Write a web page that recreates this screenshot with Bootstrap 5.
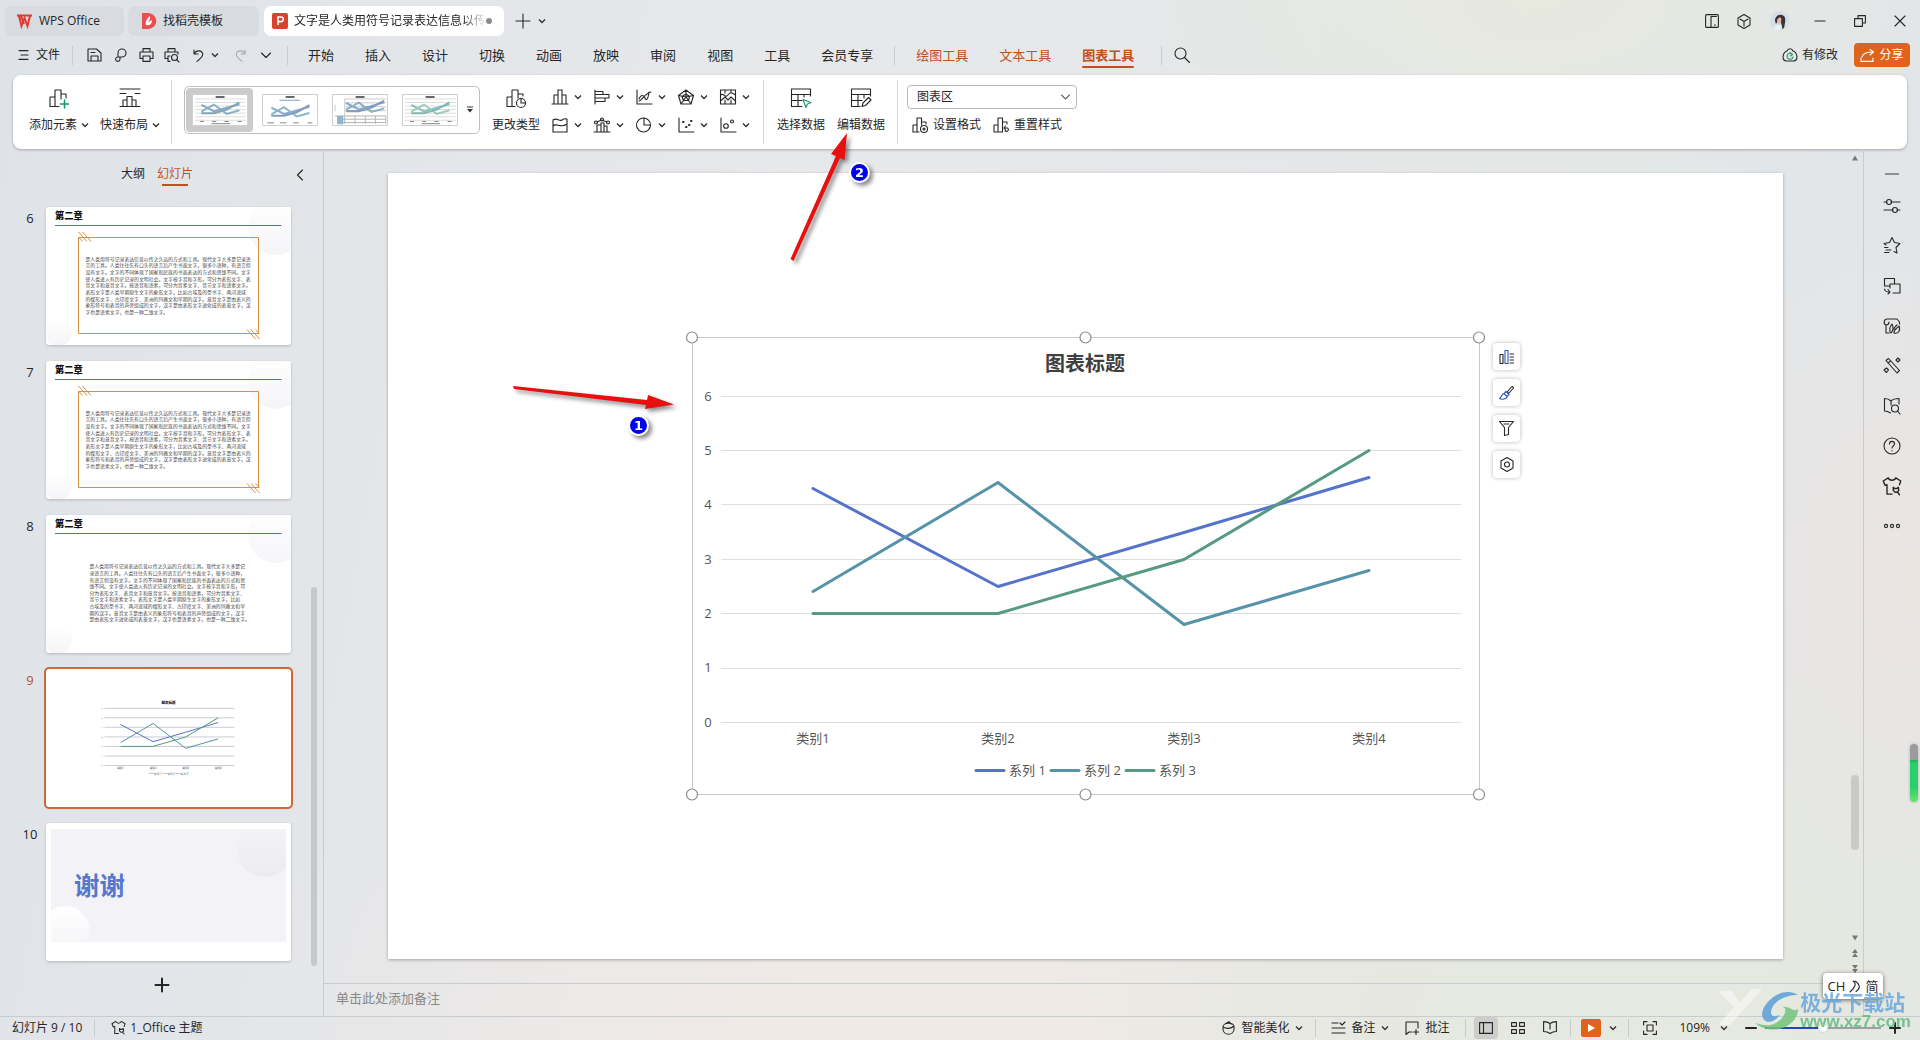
<!DOCTYPE html>
<html lang="zh-CN">
<head>
<meta charset="utf-8">
<meta name="viewport" content="width=device-width, initial-scale=1">
<title>WPS Office</title>
<link href="https://cdn.jsdelivr.net/npm/bootstrap@5.3.0/dist/css/bootstrap.min.css" rel="stylesheet">
<style>
:root{--ink:#262626;--line:#c9cccd;--accent:#c0501c;--brand:#e0631a}
body{font:12px/16px "Open Sans","Noto Sans CJK SC",sans-serif;color:var(--ink);overflow:hidden;
background:
radial-gradient(ellipse 420px 220px at 80% 0,#e7e9df,rgba(231,233,223,0)),
radial-gradient(ellipse 560px 420px at 84% 100%,#e6e9df 30%,rgba(230,233,223,0)),
radial-gradient(ellipse 700px 400px at 48% 100%,#f0eae6 20%,rgba(240,234,230,0)),
radial-gradient(ellipse 260px 380px at 100% 56%,#ece5e2,rgba(236,229,226,0)),
linear-gradient(100deg,#dfe3e8,#e7e8ea 40%,#e1e5e8)}
button{background:none;border:0;padding:0;color:inherit;font:inherit;line-height:16px}
a{color:inherit;text-decoration:none}
ul,ol{list-style:none;margin:0;padding:0}
svg{display:block;flex:none;overflow:visible}
polyline,#grid path,.plot path{fill:none;vector-effect:non-scaling-stroke}
.ic{fill:none;stroke:currentColor;stroke-width:1.1;stroke-linecap:round;stroke-linejoin:round}
.ic.bold{stroke-width:2}
.chev{width:8px;height:8px;fill:none;stroke:#333;stroke-width:1.4}
.vline{width:1px;background:var(--line);flex:none}
.ctr{display:grid;place-content:center}
/* title bar */
.titlebar{padding:6px 0 3px 5px}
.wtab{height:30px;border-radius:7px;background:#d8dbdf;flex:none}
.wtab.first{width:119px;padding-left:12px;gap:7px;margin-right:4px}
.wtab.second{width:131px;padding-left:14px;gap:7px;margin-right:5px}
.wtab.current{width:240px;background:#fff;padding:0 12px 0 8px;gap:6px}
.docname{width:192px;margin-right:-6px;white-space:nowrap;-webkit-mask-image:linear-gradient(90deg,#000 88%,transparent)}
.dot{width:6px;height:6px;border-radius:50%;background:#8b8b8b}
.wbtn{width:40px;height:30px}
.wbtn.slim{width:32px}
/* menu row */
.menurow{height:34px;margin-bottom:2px;padding:0 10px 2px 19px}
.menurow .vline{height:19px}
.qbtn{width:26px;height:26px}
.menutabs{gap:31px;font-size:13px}
.menutabs.main{margin:0 21px 0 20px}
.menutabs.tools{color:var(--accent);margin:0 27px 0 21px}
.menutabs .active{font-weight:700;position:relative}
.menutabs .active::after{content:"";position:absolute;left:0;right:0;bottom:-5px;height:2px;background:var(--accent);border-radius:1px}
.share{width:56px;height:24px;background:var(--brand);color:#fff;border-radius:4px}
/* ribbon */
.ribbon{height:74px;margin:0 13px;background:#fff;border-radius:8px;box-shadow:0 1px 3px rgba(0,0,0,.28)}
.ribbon .vline{margin:5px 0;background:#d5d5d5}
.tool{padding-top:11px;gap:7px}
.tool.drop{width:58px}
.tool.plain{width:48px}
.toolset{padding:0 12px 0 17px;gap:13px}
.toolset.data{padding:0 12px 0 13px;gap:12px}
.gallery{width:296px;height:48px;border:1px solid #bfbfbf;border-radius:5px;margin:11px 12px 0 12px;padding:1px 0 1px 1px;gap:3px}
.cell{width:67px;height:44px;border-radius:4px;padding:6px 5px 6px 6px}
.cell.on{background:#cbcbcb}
.cell svg{width:56px;height:32px;background:#fff;border:1px solid #d0d0d0;overflow:hidden}
.minis{display:grid;grid-template-columns:repeat(5,42px);grid-auto-rows:28px;margin:8px 2px 0 11px}
.minis button{display:flex;align-items:center;gap:5px}
.format{padding:10px 0 0 9px;gap:8px}
.part{width:170px;height:24px;font-size:12px;line-height:16px;border:1px solid #b9b9b9;border-radius:4px;padding:2px 24px 2px 9px;color:var(--ink);background-image:none}
.partwrap{position:relative}
.partwrap svg{position:absolute;right:7px;top:8px;pointer-events:none;color:#666}
.fmt{padding-left:5px;gap:12px}
/* slide panel */
.outline{width:324px;border-right:1px solid var(--line);flex:none}
.ohead{height:58px;padding:17px 0 0 121px}
.ohead .active{color:var(--accent);position:relative}
.ohead .active::after{content:"";position:absolute;left:5px;right:5px;bottom:-4px;height:2px;background:var(--accent)}
.slides{gap:16px}
.num{width:46px;padding:3px 0 0 14px;font-size:13px;text-align:center}
.num.active{color:var(--accent)}
.thumb{width:245px;height:138px;background:#fff;border-radius:3px;overflow:hidden;box-shadow:0 1px 3px rgba(0,0,0,.2)}
.thumb.active{outline:2px solid #cc6936}
.thumb svg{width:245px;height:138px;font-family:"Open Sans","Noto Sans CJK SC",sans-serif}
.obar{width:6px;height:379px;border-radius:3px;background:#c6c9cb;margin:380px 0 0 20px}
/* stage */
.stage{padding:24px 64px}
.sheet{background:#fff;box-shadow:0 1px 3px rgba(0,0,0,.3)}
.chartbox{width:787px;height:458px;position:relative}
.chartbox text{font-size:13px;fill:#555}
.chartbox .ctitle{font-size:20px;font-weight:700;fill:#404040;text-anchor:middle}
.mid text{text-anchor:middle}
.ctools{position:absolute;left:100%;top:6px;margin-left:14px;gap:9px}
.ctools button{width:27px;height:27px;border-radius:4px;background:#fff;box-shadow:0 0 4px rgba(0,0,0,.28)}
.s1{stroke:#5573cb}.s2{stroke:#5594a8}.s3{stroke:#569b80}
.vbar{width:16px;padding:6px 0 10px}
.vthumb{width:8px;height:75px;border-radius:4px;background:#c9cac8;margin-bottom:85px}
.notes{height:33px;border:0;border-top:1px solid var(--line);background:none;font-size:13px;line-height:18px;padding:5px 12px;color:#333;resize:none;outline:0;display:block}
.notes::placeholder{color:#888}
.rail{width:57px;border-left:1px solid var(--line);padding-top:24px;gap:20px}
.rail .dash{width:14px;height:2px;background:#8e8e8e;margin-bottom:1px}
/* status */
.status{height:24px;border-top:1px solid var(--line);padding-bottom:2px}
.status .vline{height:18px}
.sright{padding-right:19px}
.sitem{gap:6px}
.view{width:24px;height:22px;border-radius:3px}
.view.on{background:#cdcecb}
.playset{padding:0 11px 0 10px}
.play{width:20px;height:18px;background:var(--brand);border-radius:2px}
.fit{margin:0 22px 0 14px}
.pct{gap:10px;margin-right:17px}
.zoomer{width:116px;height:12px;-webkit-appearance:none;appearance:none;background:linear-gradient(90deg,#2449ae 50%,#9aa0a4 50%) center/100% 2px no-repeat;margin:0}
.zoomer::-webkit-slider-thumb{-webkit-appearance:none;width:10px;height:10px;border-radius:50%;background:#fff;border:1px solid #d5d9dd}
/* floating layers */
.callouts{position:absolute;left:0;top:0;pointer-events:none;filter:drop-shadow(3px 3px 2px rgba(0,0,0,.45))}
.callouts text{font:700 13px "DejaVu Sans",sans-serif;fill:#fff;text-anchor:middle}
.ime{position:absolute;right:37px;bottom:41px;width:60px;height:26px;background:#fff;border-radius:4px;box-shadow:0 1px 4px rgba(0,0,0,.6);font-size:13px}
.gauge{position:absolute;right:2px;top:744px;width:8px;height:58px;border-radius:4px;background:linear-gradient(#9b9b9b 28%,#22b35a 28%,#29cf6c 34%,#29cf6c 75%,#6fe36a);box-shadow:0 0 3px rgba(0,0,0,.25)}
.site{position:absolute;right:9px;bottom:7px;pointer-events:none;opacity:.85}
.site .cn{font:700 21px/23px "Noto Sans CJK SC",sans-serif;color:#6ba7dc}
.site .url{font:700 17px/17px "Liberation Sans",sans-serif;color:#63bb83}
</style>
</head>
<body class="vh-100 d-flex flex-column position-relative">
<svg width="0" height="0" class="position-absolute">
<defs>
<symbol id="cv" viewBox="0 0 8 8"><path d="M1 2.500 4 5.500 7 2.500"/></symbol>
<linearGradient id="orb" x1="0" y1="0" x2="0" y2="1"><stop offset="0" stop-color="#fff"/><stop offset="1" stop-color="#f5f5f8"/></linearGradient>
<linearGradient id="orb2" x1="0" y1="0" x2="0" y2="1"><stop offset="0" stop-color="#f5f5f8"/><stop offset="1" stop-color="#ebebf0"/></linearGradient>
<linearGradient id="orb3" x1="0" y1="0" x2="0" y2="1"><stop offset="0" stop-color="#fff"/><stop offset="1" stop-color="#f3f3f7"/></linearGradient>
<g id="grid"><path d="M29 60H769M29 114H769M29 168H769M29 223H769M29 277H769M29 332H769M29 386H769"/></g>
<g id="l1"><polyline points="121,152 306,250 492,196 677,141"/></g>
<g id="l2"><polyline points="121,255 306,146 492,288 677,234"/></g>
<g id="l3"><polyline points="121,277 306,277 492,223 677,114"/></g>
<g id="deco">
<circle cx="920" cy="80" r="112" fill="url(#orb)"/><circle cx="48" cy="500" r="56" fill="url(#orb)"/>
<text x="36" y="48" font-size="37" font-weight="900" fill="#111">第二章</text>
<path d="M36 74H942" stroke="#5470b0" stroke-width="4"/></g>
<g id="frame" fill="none" stroke="#d98f42" stroke-width="4"><path d="M130 122H850V506H130Z"/><path d="M130 100l34 38M146 100l34 38M130 120l16 18M804 490l34 38M820 490l34 38M838 490l16 18"/></g>
<g id="para30" font-size="39" fill="#444" transform="scale(.5)">
<text x="316" y="430">是人类用符号记录表达信息以传之久远的方式和工具。现代文字大多是记录语</text>
<text x="316" y="483">言的工具。人类往往先有口头的语言后产生书面文字，很多小语种，有语言但</text>
<text x="316" y="536">没有文字。文字的不同体现了国家和民族的书面表达的方式和思维不同。文字</text>
<text x="316" y="589">使人类进入有历史记录的文明社会。文字按字音和字形，可分为表形文字、表</text>
<text x="316" y="642">音文字和意音文字。按语音和语素，可分为音素文字、音节文字和语素文字。</text>
<text x="316" y="695">表形文字是人类早期原生文字的象形文字，比如古埃及的圣书字、两河流域</text>
<text x="316" y="748">的楔形文字、古印度文字、美洲的玛雅文和早期的汉字。意音文字是由表义的</text>
<text x="316" y="801">象形符号和表音的声旁组成的文字，汉字是由表形文字进化成的表意文字，汉</text>
<text x="316" y="854">字也是语素文字，也是一种二维文字。</text></g>
<symbol id="shirt" viewBox="0 0 16 16"><path d="M5 1.500 1 4l1.500 3.500L4 7v7.500h4M5 1.500C6 4 10 4 11 1.500L15 4l-1 3M9 9l1 1h2l1-1 .5 2.500L12 13H10.500L9 11.500ZM12.500 13l1.500 2"/></symbol>
</defs>
</svg>

<header>
<div class="titlebar d-flex align-items-center">
<button class="wtab first d-flex align-items-center"><svg width="15" height="14" viewBox="0 0 15 14" fill="none" stroke="#e23a2e" stroke-width="2"><path d="M0 1.500H15M2 2 4.500 12 7.500 4 10.500 12 13 2M4 2 7 10"/></svg>WPS Office</button>
<button class="wtab second d-flex align-items-center"><svg width="14" height="16" viewBox="0 0 14 16"><path d="M0 0H6C17 1 17 15 6 16H0Z" fill="#e8504f"/><path d="M4 12C3 8 5 6 8 3c0 3 0 4-2 6 2-1 3-1 4-2 0 4-2 6-6 5" fill="#fff"/></svg>找稻壳模板</button>
<div class="wtab current d-flex align-items-center"><svg width="16" height="16" viewBox="0 0 16 16"><rect width="16" height="16" rx="2" fill="#d9422b"/><path d="M6 12V4H9a2.300 2.300 0 0 1 0 4.600H6" fill="none" stroke="#fff" stroke-width="1.600"/></svg><span class="docname">文字是人类用符号记录表达信息以传</span><span class="dot"></span></div>
<button class="ms-2 p-1" aria-label="新建标签"><svg width="14" height="14" viewBox="0 0 14 14" class="ic"><path d="M7 0V14M0 7H14"/></svg></button>
<button class="p-1" aria-label="标签列表"><svg class="chev"><use href="#cv"/></svg></button>
<div class="ms-auto d-flex align-items-center">
<button class="wbtn slim ctr" aria-label="分屏"><svg width="14" height="14" viewBox="0 0 14 14" class="ic"><rect x=".6" y=".6" width="12.800" height="12.800" rx="1"/><path d="M6 13V2.500H11.500M9.500 11h1"/></svg></button>
<button class="wbtn slim ctr" aria-label="应用"><svg width="14" height="15" viewBox="0 0 14 15" class="ic"><path d="M7 .5 13 4V11L7 14.500 1 11V4ZM3 5 7 7.500 11 5M7 7.500V12"/></svg></button>
<button class="wbtn ctr" aria-label="帐号"><svg width="20" height="20" viewBox="0 0 20 20"><circle cx="10" cy="10" r="10" fill="#d5dfe6"/><path d="M5 10c0-4 3-7 7-6 5 1 3 8 2 13l-2 1c1-4-2-5-1-9-2 0-3 1-5 4" fill="#3b3137"/><path d="M7 9c1-2 3-3 4-2 1 3-1 6-2 6s-2-2-2-4" fill="#e5b9a8"/><path d="M4 17c1-4 4-4 7-2v4c-3 1-5 0-7-2" fill="#e9f1f7"/></svg></button>
<button class="wbtn ctr" aria-label="最小化"><svg width="10" height="10" viewBox="0 0 10 10" class="ic"><path d="M0 5H10"/></svg></button>
<button class="wbtn ctr" aria-label="还原"><svg width="12" height="12" viewBox="0 0 12 12" class="ic"><path d="M.6 3.600H8.400V11.400H.600ZM4 3.500V.600H11.400V8H8.500"/></svg></button>
<button class="wbtn ctr" aria-label="关闭"><svg width="10" height="10" viewBox="0 0 10 10" class="ic"><path d="M0 0 10 10M10 0 0 10"/></svg></button>
</div>
</div>

<div class="menurow d-flex align-items-center">
<button class="d-flex align-items-center gap-2 me-2 pe-1"><svg width="9" height="10" viewBox="0 0 9 10" class="ic"><path d="M0 .6H9M2 5H9M0 9.400H9"/></svg>文件</button>
<span class="vline me-2"></span>
<button class="qbtn ctr" aria-label="保存"><svg width="15" height="14" viewBox="0 0 15 14" class="ic"><path d="M1 13V1H9.500L14 5V13ZM4 13V8H11V13M4 4.500H8"/></svg></button>
<button class="qbtn ctr" aria-label="格式刷"><svg width="13" height="14" viewBox="0 0 13 14" class="ic"><path d="M4 8V5a4 4 0 1 1 4 4H3.500A2.200 2.200 0 1 0 6 11.500V9"/></svg></button>
<button class="qbtn ctr" aria-label="打印"><svg width="15" height="14" viewBox="0 0 15 14" class="ic"><path d="M4 4V.6H11V4M3.500 10.500H1V4H14V10.500H11.500M4 8H11V13.400H4Z"/></svg></button>
<button class="qbtn ctr" aria-label="打印预览"><svg width="16" height="14" viewBox="0 0 16 14" class="ic"><path d="M4 4V.6H11V4M3.500 10.500H1V4H14V6M4 13.400V8H6M4 13.400H6"/><circle cx="10.500" cy="9.500" r="3"/><path d="M12.800 11.800 15 14"/></svg></button>
<button class="qbtn ctr" aria-label="撤销"><svg width="11" height="13" viewBox="0 0 11 13" class="ic"><path d="M1 1V5H5M1 5C3 1 8 1 9.500 4 11 8 7 9 4 12.500"/></svg></button>
<button class="p-1 ps-0" aria-label="撤销列表"><svg class="chev"><use href="#cv"/></svg></button>
<button class="qbtn ctr ms-1 text-black-50" aria-label="恢复"><svg width="11" height="13" viewBox="0 0 11 13" class="ic opacity-50"><path d="M10 1V5H6M10 5C8 1 3 1 1.500 4 0 8 4 9 7 12.500"/></svg></button>
<button class="qbtn ctr me-2" aria-label="更多"><svg width="10" height="8" viewBox="0 0 10 8" class="ic"><path d="M.5 2 5 6.500 9.500 2"/></svg></button>
<span class="vline"></span>
<ul class="menutabs main d-flex">
<li><a href="#">开始</a></li><li><a href="#">插入</a></li><li><a href="#">设计</a></li><li><a href="#">切换</a></li><li><a href="#">动画</a></li><li><a href="#">放映</a></li><li><a href="#">审阅</a></li><li><a href="#">视图</a></li><li><a href="#">工具</a></li><li><a href="#">会员专享</a></li>
</ul>
<span class="vline"></span>
<ul class="menutabs tools d-flex">
<li><a href="#">绘图工具</a></li><li><a href="#">文本工具</a></li><li class="active"><a href="#">图表工具</a></li>
</ul>
<span class="vline me-2"></span>
<button aria-label="搜索" class="ms-1"><svg width="16" height="16" viewBox="0 0 16 16" class="ic"><circle cx="6.500" cy="6.500" r="5.500"/><path d="M10.500 10.500 15.500 15.500"/></svg></button>
<div class="ms-auto d-flex align-items-center gap-3">
<button class="d-flex align-items-center gap-1"><svg width="16" height="14" viewBox="0 0 16 14" class="ic"><path d="M5 3C6 0 10 0 11 3c4 1 6 9 1 10H4C-1 12 1 4 5 3"/><path d="M10.500 6.500A3 3 0 1 0 11 9M8 4.500 10.500 6.500 8.500 8" stroke="#1f9a6a"/></svg>有修改</button>
<button class="share d-flex align-items-center justify-content-center gap-1"><svg width="15" height="13" viewBox="0 0 15 13" class="ic"><path d="M1 9V12.400H13V9M2 8C3 4 7 3 13 3M10 .5 13.500 3 10 6"/></svg>分享</button>
</div>
</div>

<section class="ribbon d-flex">
<div class="toolset d-flex">
<button class="tool drop d-flex flex-column align-items-center"><svg width="24" height="24" viewBox="0 0 24 24" class="ic"><path d="M3 20.500V11H8M8 20.500V4H14V13M3 20.500H12M14 8H19V12"/><path d="M17.500 14V22M13.500 18H21.500" stroke="#16956b" stroke-width="1.500"/></svg><span class="d-flex align-items-center text-nowrap gap-1">添加元素<svg class="chev"><use href="#cv"/></svg></span></button>
<button class="tool drop d-flex flex-column align-items-center"><svg width="24" height="24" viewBox="0 0 24 24" class="ic"><path d="M2 3H22M2 7.500H8M17 7.500H22M2 20.500H22M5 20V14H9M9 20V10.500H14V20M14 14H18V20"/></svg><span class="d-flex align-items-center text-nowrap gap-1">快速布局<svg class="chev"><use href="#cv"/></svg></span></button>
</div>
<span class="vline"></span>
<div class="gallery d-flex align-items-start">
<button class="cell on" aria-label="样式 1"><svg viewBox="0 0 787 458" preserveAspectRatio="none" class="plot"><use href="#grid" stroke="#ddd"/><path d="M330 30H460" stroke="#666" stroke-width="2"/><path d="M100 405H160M280 405H340M460 405H520M650 405H710M270 438H540" stroke="#888"/><g stroke-width="2" opacity=".8"><use href="#l1" stroke="#6c93c9"/><use href="#l2" stroke="#6ba5b4"/><use href="#l3" stroke="#6197a0"/></g></svg></button>
<button class="cell" aria-label="样式 2"><svg viewBox="0 0 787 458" preserveAspectRatio="none" class="plot"><path d="M330 30H460" stroke="#666" stroke-width="2"/><path d="M240 80H540" stroke="#7ba0c5"/><path d="M60 425H160M250 425H340M440 425H520M650 425H720" stroke="#888"/><g stroke-width="2" opacity=".8"><use href="#l1" y="40" stroke="#6c93c9"/><use href="#l2" y="40" stroke="#6ba5b4"/><use href="#l3" y="40" stroke="#6685b0"/></g></svg></button>
<button class="cell" aria-label="样式 3"><svg viewBox="0 0 787 458" preserveAspectRatio="none" class="plot"><path d="M330 30H460" stroke="#666" stroke-width="2"/><path d="M170 60H770M170 120H770M170 180H770M170 240H770M170 60V310M30 150V250" stroke="#ccc"/><path d="M30 320H770M60 370H770M60 420H770M320 320V440M470 320V440M620 320V440M770 320V440M170 320V440" stroke="#b5b5b5"/><path d="M60 345H150M60 385H150M60 425H150" stroke="#8fb4cf" stroke-width="3"/><g stroke-width="2" opacity=".8"><use href="#l1" x="70" y="-30" stroke="#6c93c9"/><use href="#l2" x="70" y="-30" stroke="#6ba5b4"/><use href="#l3" x="70" y="-30" stroke="#6685b0"/></g></svg></button>
<button class="cell" aria-label="样式 4"><svg viewBox="0 0 787 458" preserveAspectRatio="none" class="plot"><use href="#grid" stroke="#ddd"/><path d="M330 30H460" stroke="#666" stroke-width="2"/><path d="M100 405H160M280 405H340M460 405H520M650 405H710M270 438H540" stroke="#888"/><g stroke-width="2" opacity=".8"><use href="#l1" stroke="#6fb3b8"/><use href="#l2" stroke="#84c4a6"/><use href="#l3" stroke="#6aa9a4"/></g></svg></button>
<button class="align-self-center" aria-label="更多样式"><svg width="8" height="8" viewBox="0 0 8 8"><path d="M1 1H7" stroke="#333"/><path d="M1 3H7L4 6.500Z" fill="#333"/></svg></button>
</div>
<button class="tool plain d-flex flex-column align-items-center text-nowrap"><svg width="24" height="24" viewBox="0 0 24 24" class="ic"><path d="M3 20.500V11H8M8 20.500V4H14V12M3 20.500H11M14 8H19V10"/><circle cx="17" cy="17" r="4.500"/><path d="M17 13V17H21"/></svg>更改类型</button>
<div class="minis">
<button aria-label="柱形图"><svg width="18" height="16" viewBox="0 0 18 16" class="ic"><path d="M1 15H17M3 15V6H7V15M7 15V1H11V15M11 6H15V15"/></svg><svg class="chev"><use href="#cv"/></svg></button>
<button aria-label="条形图"><svg width="18" height="16" viewBox="0 0 18 16" class="ic"><path d="M2 1V15M2 2.500H10V5.500H2M2 5.500H16V9H2M2 9H12V12.500H2"/></svg><svg class="chev"><use href="#cv"/></svg></button>
<button aria-label="折线图"><svg width="18" height="16" viewBox="0 0 18 16" class="ic"><path d="M2 1V15H17M4 12C7 12 10 4 16 3M4 10C6 5 9 6 10 9s3 2 4-6"/></svg><svg class="chev"><use href="#cv"/></svg></button>
<button aria-label="雷达图"><svg width="18" height="16" viewBox="0 0 18 16" class="ic"><path d="M9 1 16.500 6.500 14 15H4L1.500 6.500ZM9 5 12.500 7.500 11.500 11.500H6.500L5 7.500ZM9 1V8M1.500 6.500 9 8 16.500 6.500M4 15 9 8 14 15"/></svg><svg class="chev"><use href="#cv"/></svg></button>
<button aria-label="股价图"><svg width="18" height="16" viewBox="0 0 18 16" class="ic"><path d="M1.500 1H16.500V15H1.500ZM1.500 6C5 3 6 10 9 6S13 4 16.500 6M1.500 12 6 8 9 11 12 8 16.500 12M6 1V4M12 1V4M6 11V15M12 11V15"/></svg><svg class="chev"><use href="#cv"/></svg></button>
<button aria-label="面积图"><svg width="18" height="16" viewBox="0 0 18 16" class="ic"><path d="M2 15V3C6 0 8 5 11 3S14 2 16 2V15ZM2 9C6 5 9 12 16 7"/></svg><svg class="chev"><use href="#cv"/></svg></button>
<button aria-label="组合图"><svg width="18" height="16" viewBox="0 0 18 16" class="ic"><path d="M1 15H17M4 15V8H8M8 15V6H11V15M11 9H14V15M4 5 8.500 3 14 5"/><circle cx="3" cy="5.500" r="1.500"/><circle cx="9" cy="2.500" r="1.500"/><circle cx="15" cy="5.500" r="1.500"/></svg><svg class="chev"><use href="#cv"/></svg></button>
<button aria-label="饼图"><svg width="18" height="16" viewBox="0 0 18 16" class="ic"><circle cx="8.500" cy="8" r="7"/><path d="M9 1V8H15.500"/></svg><svg class="chev"><use href="#cv"/></svg></button>
<button aria-label="散点图"><svg width="18" height="16" viewBox="0 0 18 16" class="ic"><path d="M2 1V15H17"/><path d="M6 5h.5M9 10h.5M12 8h.5M14 4h.5" stroke-width="2"/></svg><svg class="chev"><use href="#cv"/></svg></button>
<button aria-label="气泡图"><svg width="18" height="16" viewBox="0 0 18 16" class="ic"><path d="M2 1V15H17"/><circle cx="7" cy="9" r="2.300"/><circle cx="13" cy="4.500" r="1.500"/></svg><svg class="chev"><use href="#cv"/></svg></button>
</div>
<span class="vline"></span>
<div class="toolset data d-flex">
<button class="tool plain d-flex flex-column align-items-center text-nowrap"><svg width="24" height="24" viewBox="0 0 24 24" class="ic"><path d="M2.500 3H21.500V10M2.500 3V20.500H13M2.500 8.500H21.500M2.500 14.500H13M9 8.500V20M15 8.500V11"/><path d="M14 13.500 22 16.500 18.500 18 17 21.500Z" stroke="#16956b"/></svg>选择数据</button>
<button class="tool plain d-flex flex-column align-items-center text-nowrap"><svg width="24" height="24" viewBox="0 0 24 24" class="ic"><path d="M2.500 3H21.500V10M2.500 3V20.500H11M2.500 8.500H21.500M2.500 14.500H13M9 8.500V20M15 8.500V12M13 20.500 14 17 19.500 11.500 22 14 16.500 19.500Z"/></svg>编辑数据</button>
</div>
<span class="vline"></span>
<div class="format d-flex flex-column">
<label class="partwrap"><select class="form-select part" aria-label="图表元素"><option>图表区</option></select><svg width="9" height="8" viewBox="0 0 9 8" class="ic"><path d="M.5 2 4.500 6 8.500 2"/></svg></label>
<div class="fmt d-flex">
<button class="d-flex align-items-center gap-1"><svg width="17" height="16" viewBox="0 0 17 16" class="ic"><path d="M1 15V8H5M5 15V1H9.500V8M1 15H7M9.500 5H14V7"/><circle cx="12" cy="12" r="3.500"/><circle cx="12" cy="12" r="1"/></svg>设置格式</button>
<button class="d-flex align-items-center gap-1"><svg width="17" height="16" viewBox="0 0 17 16" class="ic"><path d="M1 15V8H5M5 15V1H9.500V15M1 15H9.500M9.500 5H14V7M11 11H14.500C17 13 14 15 12 14M12.500 9 11 11 12.500 13"/></svg>重置样式</button>
</div>
</div>
</section>
</header>

<main class="d-flex flex-grow-1 overflow-hidden">
<aside class="outline d-flex flex-column">
<div class="ohead d-flex align-items-start">
<a href="#" class="me-2">大纲</a><a href="#" class="active ms-1">幻灯片</a>
<button class="ms-auto me-1 pe-3" aria-label="收起"><svg width="6" height="12" viewBox="0 0 6 12" class="ic mt-1"><path d="M5.500 0 .5 5 5.500 10"/></svg></button>
</div>
<div class="d-flex align-items-start">
<ol class="slides d-flex flex-column">
<li class="d-flex"><span class="num">6</span><div class="thumb"><svg viewBox="0 0 980 552"><use href="#deco"/><use href="#frame"/><use href="#para30"/></svg></div></li>
<li class="d-flex"><span class="num">7</span><div class="thumb"><svg viewBox="0 0 980 552"><use href="#deco"/><use href="#frame"/><use href="#para30"/></svg></div></li>
<li class="d-flex"><span class="num">8</span><div class="thumb"><svg viewBox="0 0 980 552"><use href="#deco"/><g font-size="39" fill="#444" transform="scale(.5)">
<text x="348" y="426">是人类用符号记录表达信息以传之久远的方式和工具。现代文字大多是记</text>
<text x="348" y="479">录语言的工具。人类往往先有口头的语言后产生书面文字，很多小语种，</text>
<text x="348" y="532">有语言但没有文字。文字的不同体现了国家和民族的书面表达的方式和思</text>
<text x="348" y="585">维不同。文字使人类进入有历史记录的文明社会。文字按字音和字形，可</text>
<text x="348" y="638">分为表形文字、表音文字和意音文字。按语音和语素，可分为音素文字、</text>
<text x="348" y="691">音节文字和语素文字。表形文字是人类早期原生文字的象形文字，比如</text>
<text x="348" y="744">古埃及的圣书字、两河流域的楔形文字、古印度文字、美洲的玛雅文和早</text>
<text x="348" y="797">期的汉字。意音文字是由表义的象形符号和表音的声旁组成的文字，汉字</text>
<text x="348" y="850">是由表形文字进化成的表意文字，汉字也是语素文字，也是一种二维文字。</text></g></svg></div></li>
<li class="d-flex"><span class="num active">9</span><div class="thumb active"><svg viewBox="0 0 1396 786"><g transform="translate(304 164)"><use href="#grid" stroke="#c8ccd4"/><g font-size="15" fill="#444" class="mid"><text x="394" y="34" font-size="20" font-weight="900" fill="#222">图表标题</text><text x="121" y="408">类别1</text><text x="306" y="408">类别2</text><text x="492" y="408">类别3</text><text x="677" y="408">类别4</text><text x="394" y="440">━━系列 1 ━━系列 2 ━━系列 3</text></g><g font-size="14" fill="#555" class="mid"><text x="16" y="65">6</text><text x="16" y="119">5</text><text x="16" y="173">4</text><text x="16" y="228">3</text><text x="16" y="282">2</text><text x="16" y="337">1</text><text x="16" y="391">0</text></g><g><use href="#l1" class="s1"/><use href="#l2" class="s2"/><use href="#l3" class="s3"/></g></g></svg></div></li>
<li class="d-flex"><span class="num">10</span><div class="thumb"><svg viewBox="0 0 980 552"><defs><clipPath id="cp"><rect x="20" y="24" width="940" height="452"/></clipPath></defs><g clip-path="url(#cp)"><rect x="20" y="24" width="940" height="452" fill="#f3f3f7"/><circle cx="876" cy="104" r="112" fill="url(#orb2)"/><circle cx="76" cy="430" r="98" fill="url(#orb3)"/></g><text x="112" y="288" font-size="102" font-weight="700" fill="#5877cb">谢谢</text></svg></div></li>
</ol>
<span class="obar"></span>
</div>
<button class="mx-auto mt-2 p-1" aria-label="新建幻灯片"><svg width="14" height="14" viewBox="0 0 14 14" class="ic bold"><path d="M7 .5V13.500M.5 7H13.500"/></svg></button>
</aside>

<div class="d-flex flex-column flex-grow-1">
<div class="d-flex flex-grow-1">
<div class="stage flex-grow-1 d-flex">
<div class="sheet flex-grow-1 d-flex align-items-center justify-content-center">
<div class="chartbox">
<svg width="787" height="458" viewBox="0 0 787 458">
<rect x=".5" y=".5" width="787" height="457" fill="none" stroke="#c8c8c8"/>
<text class="ctitle" x="393" y="34">图表标题</text>
<use href="#grid" stroke="#dedede" y="-.5"/>
<g class="mid"><text x="16" y="64">6</text><text x="16" y="118">5</text><text x="16" y="172">4</text><text x="16" y="227">3</text><text x="16" y="281">2</text><text x="16" y="335">1</text><text x="16" y="390">0</text>
<text x="121" y="406">类别1</text><text x="306" y="406">类别2</text><text x="492" y="406">类别3</text><text x="677" y="406">类别4</text></g>
<g stroke-width="3" stroke-linecap="round" stroke-linejoin="round"><use href="#l1" y="-.5" class="s1"/><use href="#l2" y="-.5" class="s2"/><use href="#l3" y="-.5" class="s3"/>
<path class="s1" d="M284 433.500H312"/><path class="s2" d="M359 433.500H387"/><path class="s3" d="M434 433.500H462"/></g>
<text x="317" y="438">系列 1</text><text x="392" y="438">系列 2</text><text x="467" y="438">系列 3</text>
<g fill="#fff" stroke="#8a8a8a" stroke-width="1.200"><circle cx="0" cy="0.500" r="5.500"/><circle cx="393.500" cy="0.500" r="5.500"/><circle cx="787" cy="0.500" r="5.500"/><circle cx="0" cy="457.500" r="5.500"/><circle cx="393.500" cy="457.500" r="5.500"/><circle cx="787" cy="457.500" r="5.500"/></g>
</svg>
<div class="ctools d-flex flex-column">
<button class="ctr" aria-label="图表元素"><svg width="15" height="14" viewBox="0 0 15 14" class="ic"><path d="M1 4.500H4V13.500H1ZM11 4H14.500M11 7H14.500M11 10H14.500M11 13H14.500"/><path d="M6 .5H9V13.500H6Z" stroke="#3056b8"/></svg></button>
<button class="ctr" aria-label="图表样式"><svg width="15" height="14" viewBox="0 0 15 14" class="ic"><path d="M8 6 12.500 1C14 0 15 1.500 14 2.500L9.500 7.500Z"/><path d="M7 5.500 10 8.500 8 10.500 5 7.500ZM5 7.500C2 8 3 11 .5 12.500 3 14 8 13 8 10.500" stroke="#3056b8"/></svg></button>
<button class="ctr" aria-label="筛选"><svg width="15" height="15" viewBox="0 0 15 15" class="ic"><path d="M.5.5H14.500L9.500 6.500V13.500L5.500 14.500V6.500ZM5 3H10"/></svg></button>
<button class="ctr" aria-label="设置"><svg width="14" height="15" viewBox="0 0 14 15" class="ic"><path d="M7 .5 13 4V11L7 14.500 1 11V4Z"/><circle cx="7" cy="7.500" r="2.500"/></svg></button>
</div>
</div>
</div>
</div>
<div class="vbar d-flex flex-column align-items-center">
<svg width="6" height="6" viewBox="0 0 6 6" fill="#777"><path d="M0 5.500 3 .5 6 5.500Z"/></svg>
<span class="vthumb mt-auto"></span>
<svg width="6" height="6" viewBox="0 0 6 6" fill="#777"><path d="M0 .5 3 5.500 6 .5Z"/></svg>
<svg width="6" height="8" viewBox="0 0 6 8" fill="#777" class="mt-2"><path d="M0 4 3 0 6 4ZM0 8 3 4 6 8Z"/></svg>
<svg width="6" height="8" viewBox="0 0 6 8" fill="#777" class="mt-2"><path d="M0 0 3 4 6 0ZM0 4 3 8 6 4Z"/></svg>
</div>
</div>
<textarea class="notes w-100" rows="1" placeholder="单击此处添加备注" aria-label="备注"></textarea>
</div>

<nav class="rail d-flex flex-column align-items-center">
<span class="dash"></span>
<button aria-label="属性"><svg width="20" height="20" viewBox="0 0 20 20" class="ic"><path d="M2 6H5M9 6H18M2 14H11M15 14H18"/><circle cx="7" cy="6" r="2.500"/><circle cx="13" cy="14" r="2.500"/></svg></button>
<button aria-label="动画"><svg width="20" height="20" viewBox="0 0 20 20" class="ic"><path d="M4 9 2 7.500 7.500 6.500 10 1.500 12.500 6.500 18 7.500 14 11.500 15 17 12 15.500M2.500 11.500H6M4 14H9M2.500 16.500H7"/></svg></button>
<button aria-label="切换"><svg width="20" height="20" viewBox="0 0 20 20" class="ic"><path d="M7 10H2.500V2.500H12.500V8M8 8H18V17H11M8 8V12M2.500 13C3 16 5 16 7.500 16M6 13.500 8 16 6 18"/></svg></button>
<button aria-label="稻壳"><svg width="20" height="20" viewBox="0 0 20 20" class="ic"><path d="M7 17H4V9C1 8 2 3 5 3H15L17.500 6V8M4 9C6 9 7 8 7 6M8 14C7 11 9 10 10 8 12 11 11 15 9 17 7 16 8 15 8 14M12 17C11 13 15 13 17 10 19 15 16 18 12 17M12 13C12 11 14 10 15 9"/></svg></button>
<button aria-label="美化"><svg width="20" height="20" viewBox="0 0 20 20" class="ic"><path d="M4 4.500 6.500 2.500 17.500 14.500 15 17ZM6 7 8.500 5M14 4 16 2 18 4 16 6ZM2 14 4.500 12 6.500 14 4.500 16.500Z"/></svg></button>
<button aria-label="查找"><svg width="20" height="20" viewBox="0 0 20 20" class="ic"><path d="M9 5C7 3 5 2.500 2.500 2.500V15C5 15 7 16 8.500 17M9 5C11 3 14 2.500 17 2.500V8M9 5V9"/><circle cx="13" cy="12.500" r="3.500"/><path d="M15.500 15 18 18"/></svg></button>
<button aria-label="帮助"><svg width="20" height="20" viewBox="0 0 20 20" class="ic"><circle cx="10" cy="10" r="8"/><path d="M7.500 8C7.500 4.500 12.500 4.500 12.500 8 12.500 10 10 10 10 12M10 14.500v.3"/></svg></button>
<button aria-label="主题"><svg width="20" height="20" class="ic"><use href="#shirt"/></svg></button>
<button aria-label="更多"><svg width="20" height="20" viewBox="0 0 20 20" class="ic"><circle cx="4" cy="10" r="1.600"/><circle cx="10" cy="10" r="1.600"/><circle cx="16" cy="10" r="1.600"/></svg></button>
</nav>
</main>

<footer class="status d-flex align-items-center text-nowrap">
<span class="ms-2 ps-1 me-2">幻灯片 9 / 10</span><span class="vline ms-1 me-3"></span>
<button class="d-flex align-items-center gap-1"><svg width="15" height="15" class="ic"><use href="#shirt"/></svg>1_Office 主题</button>
<div class="sright ms-auto d-flex align-items-center">
<button class="sitem d-flex align-items-center me-2 pe-1"><svg width="13" height="14" viewBox="0 0 13 14" class="ic"><path d="M1 6C1 1 12 1 12 6V8C12 15 1 15 1 8ZM1 6C4 8 9 8 12 5M3 3 7 .6 9 3"/></svg>智能美化<svg class="chev"><use href="#cv"/></svg></button>
<span class="vline me-3"></span>
<button class="sitem d-flex align-items-center me-3"><svg width="13" height="12" viewBox="0 0 13 12" class="ic"><path d="M0 1H6M0 6H13M0 11H13M8 1 10 3 13 0"/></svg>备注<svg class="chev"><use href="#cv"/></svg></button>
<button class="sitem d-flex align-items-center me-3"><svg width="14" height="14" viewBox="0 0 14 14" class="ic"><path d="M7 11H4L1 13.500V1H13V7M11 8.500V13.500M8.500 11H13.500"/></svg>批注</button>
<span class="vline"></span>
<div class="d-flex gap-2 px-2">
<button class="view on ctr" aria-label="普通视图"><svg width="14" height="12" viewBox="0 0 14 12" class="ic"><path d="M.6.6H13.400V11.400H.600ZM4.500.6V11.400"/></svg></button>
<button class="view ctr" aria-label="幻灯片浏览"><svg width="14" height="12" viewBox="0 0 14 12" class="ic"><path d="M.6.6H5.400V4.400H.600ZM8.600.6H13.400V4.400H8.600ZM.6 7.600H5.400V11.400H.600ZM8.600 7.600H13.400V11.400H8.600Z"/></svg></button>
<button class="view ctr" aria-label="阅读视图"><svg width="14" height="13" viewBox="0 0 14 13" class="ic"><path d="M7 2.500C5 1 3 .6.600.6V10.500C3 10.500 5 11 7 12.500 9 11 11 10.500 13.400 10.500V.6C11 .6 9 1 7 2.500V8"/></svg></button>
</div>
<span class="vline"></span>
<div class="playset d-flex align-items-center gap-2">
<button class="play ctr" aria-label="放映"><svg width="7" height="8" viewBox="0 0 7 8" fill="#fff"><path d="M0 0 7 4 0 8Z"/></svg></button>
<button aria-label="放映选项"><svg class="chev"><use href="#cv"/></svg></button>
</div>
<span class="vline"></span>
<button class="fit" aria-label="适应窗口"><svg width="14" height="14" viewBox="0 0 14 14" class="ic"><path d="M.6 4V.6H4M10 .6H13.400V4M13.400 10V13.400H10M4 13.400H.600V10M4 4H10V10H4Z"/></svg></button>
<button class="pct d-flex align-items-center">109%<svg class="chev"><use href="#cv"/></svg></button>
<button aria-label="缩小"><svg width="12" height="12" viewBox="0 0 12 12" class="ic bold"><path d="M1 6H11"/></svg></button>
<input class="zoomer mx-2" type="range" min="0" max="100" value="50" aria-label="缩放">
<button aria-label="放大"><svg width="12" height="12" viewBox="0 0 12 12" class="ic bold"><path d="M6 1V11M1 6H11"/></svg></button>
</div>
</footer>

<svg class="callouts" width="900" height="460" viewBox="0 0 900 460">
<g fill="#e8100f"><path d="M513 386 514 389 646 405 645 409 674 404.500 648 395 647 400Z"/><path d="M790.500 259 793.500 261 840 158 844.500 160 847 133 831 154 836 156Z"/></g>
<g fill="#0000f0" stroke="#fff" stroke-width="2"><circle cx="638.500" cy="425.500" r="9.500"/><circle cx="859.500" cy="172.500" r="9.500"/></g>
<text x="638.500" y="430">1</text><text x="859.500" y="177">2</text>
</svg>
<span class="gauge"></span>
<div class="ime d-flex align-items-center justify-content-center gap-1">CH <svg width="12" height="13" viewBox="0 0 12 13" class="ic"><path d="M4 1C8 3 6 8 1 12M6 1C12 5 11 9 7 11.500"/></svg> 简</div>
<div class="site d-flex align-items-center">
<svg width="62" height="46" viewBox="0 0 62 46"><path d="M0 10H14L22 22 34 8H44L12 44H0L16 26Z" fill="#fff" opacity=".55" transform="translate(-20 -6)"/><path d="M60 8C46 -2 24 14 24 28 26 38 36 36 42 28 35 31 31 28 34 21 38 12 50 8 60 8Z" fill="#5b9fd8"/><path d="M44 20C50 20 48 30 38 36 31 40 24 38 17 36 33 50 60 40 60 22 55 26 52 18 44 20Z" fill="#74c47b"/></svg>
<div><div class="cn">极光下载站</div><div class="url">www.xz7.com</div></div>
</div>
<script src="https://cdn.jsdelivr.net/npm/bootstrap@5.3.0/dist/js/bootstrap.bundle.min.js"></script>
</body>
</html>
